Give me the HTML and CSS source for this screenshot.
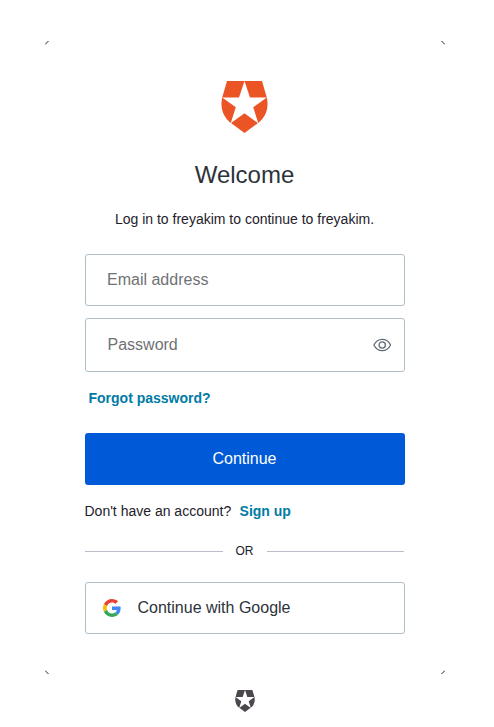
FILE: index.html
```html
<!DOCTYPE html>
<html lang="en">
<head>
<meta charset="utf-8">
<title>Log in</title>
<link rel="stylesheet" href="styles.css">
</head>
<body>
<svg class="defs" aria-hidden="true">
  <symbol id="shield" viewBox="0 0 47 52">
    <path d="M6 0H41L45.5 15.5C48.500 26 45 36 37 42L23.500 52L10 42C2 36-1.500 26 1.500 15.500Z"/>
    <path class="star" d="M23.500 0L29 16.500H45.800L32.200 26.300L37.300 42.300L23.500 32.300L9.700 42.300L14.800 26.300L1.200 16.500H18Z"/>
  </symbol>
</svg>
<main class="card">
  <svg class="corner tl" viewBox="0 0 5 5"><path d="M0 3.500L3.500 0"/></svg>
  <svg class="corner tr" viewBox="0 0 5 5"><path d="M0 3.500L3.500 0"/></svg>
  <svg class="corner bl" viewBox="0 0 5 5"><path d="M0 3.500L3.500 0"/></svg>
  <svg class="corner br" viewBox="0 0 5 5"><path d="M0 3.500L3.500 0"/></svg>
  <svg class="logo"><use href="#shield"/></svg>
  <h1>Welcome</h1>
  <p class="intro">Log in to freyakim to continue to freyakim.</p>
  <div class="field">Email address</div>
  <div class="field password"><span>Password</span>
    <svg class="eye" viewBox="0 0 20 14"><path d="M1 7C5-1.200 15-1.200 19 7C15 15.200 5 15.200 1 7Z"/><circle cx="10" cy="7" r="3.400"/></svg>
  </div>
  <a class="forgot">Forgot password?</a>
  <button class="primary">Continue</button>
  <p class="signup">Don't have an account? <a>Sign up</a></p>
  <div class="divider"><span>OR</span></div>
  <button class="google">
    <svg viewBox="0 0 48 48">
      <path fill="#ea4335" d="M24 9.500c3.540 0 6.710 1.220 9.210 3.600l6.850-6.850C35.900 2.380 30.470 0 24 0 14.620 0 6.510 5.380 2.560 13.220l7.980 6.190C12.430 13.720 17.740 9.500 24 9.500z"/>
      <path fill="#4285f4" d="M46.980 24.550c0-1.570-.15-3.090-.38-4.550H24v9.020h12.940c-.58 2.960-2.260 5.480-4.780 7.180l7.730 6c4.510-4.180 7.090-10.360 7.090-17.650z"/>
      <path fill="#fbbc05" d="M10.530 28.590A14.500 14.500 0 0 1 9.770 24c0-1.600.27-3.140.76-4.590l-7.980-6.190A24 24 0 0 0 0 24c0 3.880.92 7.540 2.560 10.780z"/>
      <path fill="#34a853" d="M24 48c6.480 0 11.930-2.130 15.890-5.810l-7.730-6C30.010 37.640 27.240 38.490 24 38.490c-6.260 0-11.570-4.220-13.470-9.910l-7.980 6.190C6.510 42.620 14.620 48 24 48z"/>
    </svg>
    <span>Continue with Google</span>
  </button>
</main>
<svg class="badge"><use href="#shield"/></svg>
</body>
</html>
```

FILE: styles.css
```css
* { box-sizing: border-box; }
body {
  margin: 0;
  padding: 41px 49px 0 45px;
  background: #fff;
  color: #1e212a;
  font-family: "Liberation Sans", Arial, sans-serif;
  font-size: 14px;
}
.defs { position: absolute; width: 0; height: 0; }
.star { fill: #fff; }
.card {
  position: relative;
  display: flex;
  flex-direction: column;
  height: 633px;
  padding: 40px;
}
.corner { position: absolute; width: 5px; height: 5px; fill: none; stroke: #222; stroke-width: 1; }
.tl { top: 0; left: 0; }
.tr { top: 0; right: 0; transform: scaleX(-1); }
.bl { bottom: 0; left: 0; transform: scaleY(-1); }
.br { bottom: 0; right: 0; transform: scale(-1); }
.logo { align-self: center; width: 47px; height: 52px; margin-right: 2px; fill: #eb5424; }
h1 {
  margin: 28px 1px 0 0;
  font-size: 24px;
  line-height: 28px;
  font-weight: 400;
  text-align: center;
  color: #2d333a;
}
.intro { margin: 20px 1px 0 0; line-height: 20px; text-align: center; }
.field {
  display: flex;
  align-items: center;
  height: 52px;
  margin-top: 25px;
  padding: 0 13px 0 21px;
  border: 1px solid #adbfc9;
  border-radius: 3px;
  font-size: 16px;
  color: #6f7275;
}
.password { justify-content: space-between; height: 54px; margin-top: 12px; padding-left: 21.500px; }
.eye { width: 18.500px; height: 14px; fill: none; stroke: #626b73; stroke-width: 1.400; }
a { color: #007ba5; font-weight: 700; }
.forgot { margin: 16px 0 0 3.500px; line-height: 20px; }
button { font: 16px "Liberation Sans", Arial, sans-serif; border-radius: 3px; height: 52px; }
.primary { margin-top: 25px; padding: 0 1px 0 0; border: 0; background: #0059d6; color: #fff; }
.signup { margin: 16px 0 0 -0.500px; line-height: 20px; }
.signup a { margin-left: 4.500px; }
.divider { display: flex; align-items: center; gap: 13px; margin: 22px 1px 0 0; font-size: 12px; line-height: 17px; }
.divider::before, .divider::after { content: ""; flex: 1; height: 1px; background: #b9bec9; }
.google {
  display: flex;
  align-items: center;
  gap: 16.500px;
  margin-top: 22px;
  padding: 0 17px;
  border: 1px solid #adbfc9;
  background: #fff;
  color: #2d333a;
}
.google svg { width: 18px; height: 18px; }
.badge { display: block; width: 20px; height: 22px; margin: 16px 0 0 190px; fill: #4b474d; }
```
